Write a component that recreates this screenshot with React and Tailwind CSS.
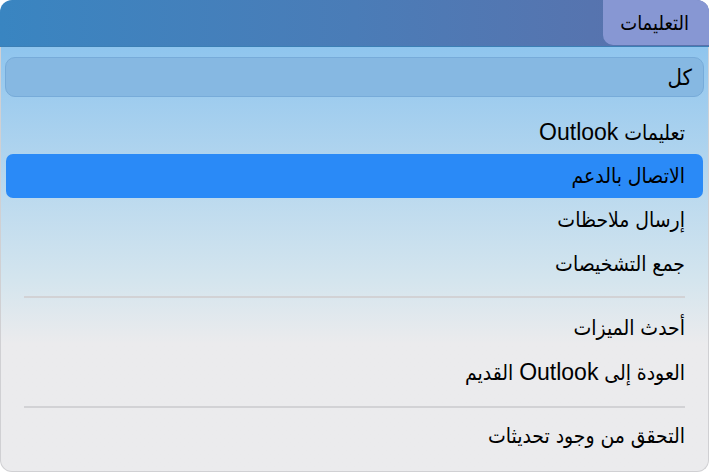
import React from 'react';

const font = { fontFamily: '"Liberation Sans", "DejaVu Sans Condensed", "DejaVu Sans", sans-serif' };

function Item({ children, active }) {
  return (
    <div
      className={`mx-[5px] h-[44px] flex items-center pr-[18px] text-[21px] text-black ${
        active ? 'bg-[#2a8af7] rounded-[7px]' : ''
      }`}
    >
      <span>{children}</span>
    </div>
  );
}

function Separator({ top, bottom }) {
  return (
    <div className={`${top} ${bottom} px-[23px]`}>
      <div className="h-[2px] bg-[#d2d2d5]" />
    </div>
  );
}

const Brand = () => <span className="text-[23px]">Outlook</span>;

export default function App() {
  return (
    <div dir="rtl" style={font} className="w-[709px] h-[472px] overflow-hidden bg-white flex flex-col">
      {/* menu bar */}
      <div className="h-[46px] shrink-0 flex bg-gradient-to-l from-[#5b70ab] via-[#4a7cb7] to-[#3985c1] rounded-tl-[12px] rounded-tr-[12px]">
        <div className="w-[106px] h-[45px] bg-[#8797d3] rounded-bl-[10px] rounded-tr-[12px] flex items-center pr-[20px] text-[20px] text-black">
          التعليمات
        </div>
      </div>
      <div className="h-px shrink-0 bg-[#3c7fb5]" />

      {/* dropdown */}
      <div className="flex-1 flex flex-col border-l border-r border-b border-[#d0d0d3] rounded-bl-[12px] rounded-br-[12px] bg-gradient-to-b from-[#8fc5ee] via-[#d4e5ee] via-55% to-[#ebebed] to-70%">
        <div className="mt-[10px] mx-[4px] h-[40px] rounded-[10px] bg-[#86b8e2] border border-[#77abd9] flex items-center pr-[11px] text-[22px] text-black">
          كل
        </div>
        <div className="h-[13px]" />
        <Item>تعليمات <Brand /></Item>
        <Item active>الاتصال بالدعم</Item>
        <Item>إرسال ملاحظات</Item>
        <Item>جمع التشخيصات</Item>
        <Separator top="pt-[10px]" bottom="pb-[8px]" />
        <Item>أحدث الميزات</Item>
        <Item>العودة إلى <Brand /> القديم</Item>
        <Separator top="pt-[12px]" bottom="pb-[6px]" />
        <Item>التحقق من وجود تحديثات</Item>
      </div>
    </div>
  );
}
